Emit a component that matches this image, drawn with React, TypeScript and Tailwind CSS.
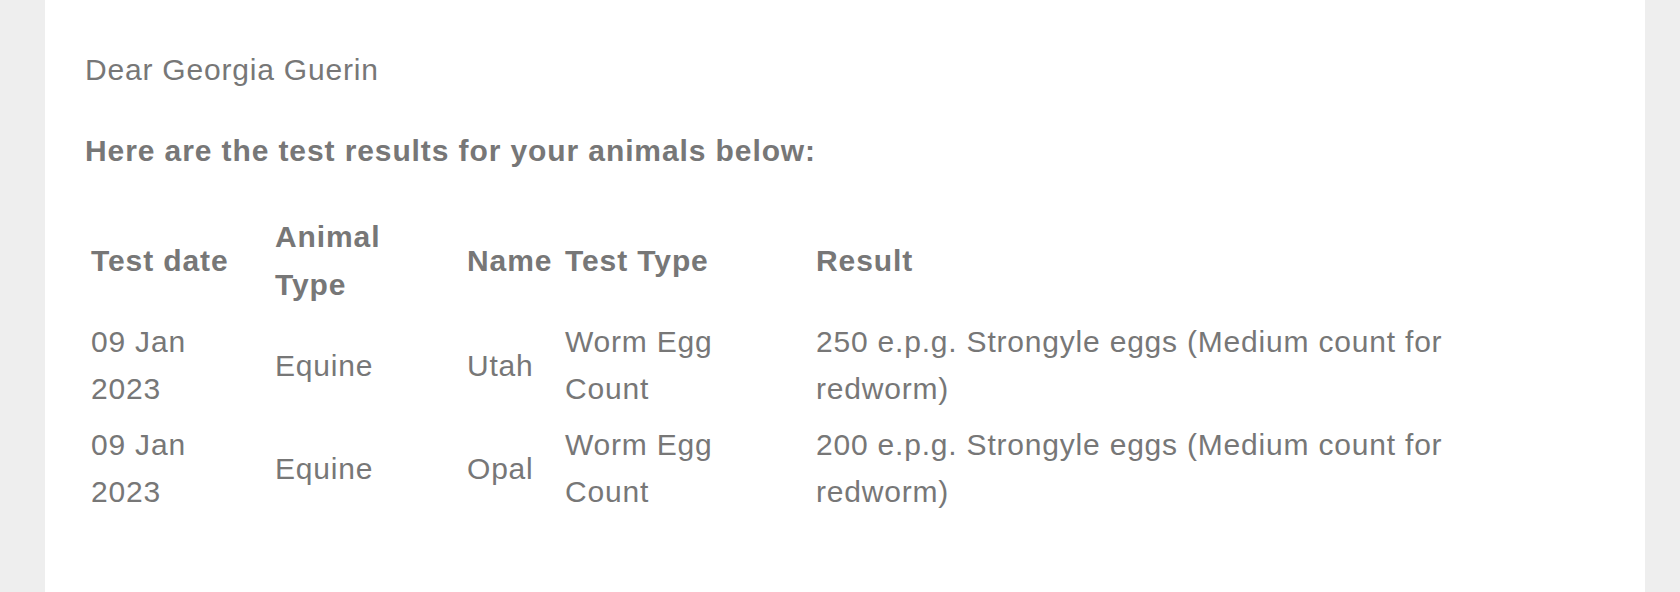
const rows = [
  { name: 'Utah', result: '250 e.p.g. Strongyle eggs (Medium count for redworm)' },
  { name: 'Opal', result: '200 e.p.g. Strongyle eggs (Medium count for redworm)' },
]

export default function App() {
  return (
    <div className="min-h-[592px] bg-[#eeeeee] pl-[45px] font-['Liberation_Sans',Arial,sans-serif] text-[30px] leading-[47px] tracking-[0.8px] text-[#777777]">
      <div className="min-h-[592px] w-[1600px] bg-white pl-[40px] pt-[46px]">
        <p>Dear Georgia Guerin</p>
        <p className="mt-[34px] font-bold tracking-[0.9px]">Here are the test results for your animals below:</p>

        <table className="ml-[1px] mt-[34px] table-fixed border-separate border-spacing-[1px]">
          <thead>
            <tr className="text-left align-middle font-bold leading-[48px] tracking-[0.9px]">
              <th className="w-[183px] p-[4px]">Test date</th>
              <th className="w-[191px] p-[4px]">
                Animal
                <br />
                Type
              </th>
              <th className="w-[97px] p-[4px]">Name</th>
              <th className="w-[250px] p-[4px]">Test Type</th>
              <th className="w-[728px] p-[4px]">Result</th>
            </tr>
          </thead>
          <tbody>
            {rows.map((r) => (
              <tr key={r.name} className="align-middle">
                <td className="p-[4px]">
                  09 Jan
                  <br />
                  2023
                </td>
                <td className="p-[4px]">Equine</td>
                <td className="p-[4px]">{r.name}</td>
                <td className="p-[4px]">
                  Worm Egg
                  <br />
                  Count
                </td>
                <td className="p-[4px]">{r.result}</td>
              </tr>
            ))}
          </tbody>
        </table>
      </div>
    </div>
  )
}
